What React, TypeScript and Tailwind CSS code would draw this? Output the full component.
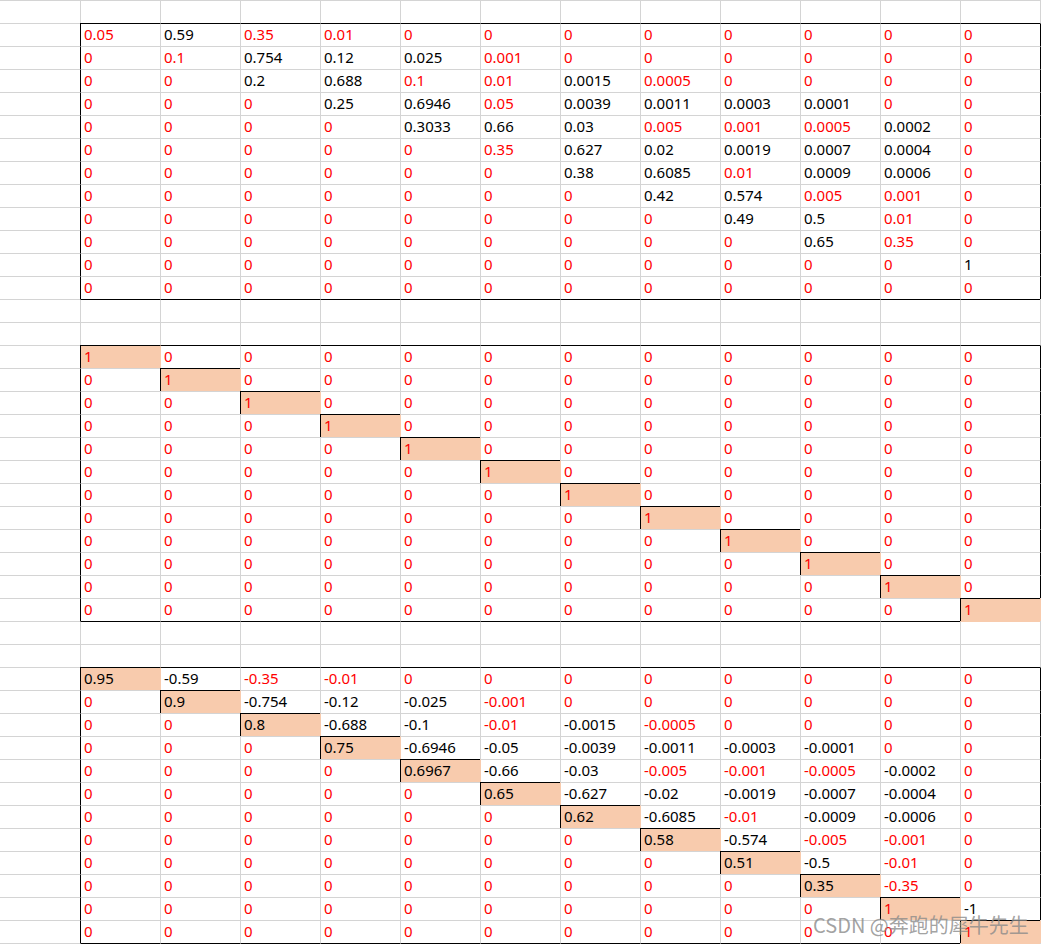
import React from 'react'

type Cell = { v: string; red: boolean }

const R = (v: string): Cell => ({ v, red: true })
const B = (v: string): Cell => ({ v, red: false })

function zeros(n: number): Cell[] {
  return Array.from({ length: n }, () => R('0'))
}

// 转移矩阵
const matA: Cell[][] = [
  [R('0.05'), B('0.59'), R('0.35'), R('0.01'), ...zeros(8)],
  [R('0'), R('0.1'), B('0.754'), B('0.12'), B('0.025'), R('0.001'), ...zeros(6)],
  [...zeros(2), B('0.2'), B('0.688'), R('0.1'), R('0.01'), B('0.0015'), R('0.0005'), ...zeros(4)],
  [...zeros(3), B('0.25'), B('0.6946'), R('0.05'), B('0.0039'), B('0.0011'), B('0.0003'), B('0.0001'), ...zeros(2)],
  [...zeros(4), B('0.3033'), B('0.66'), B('0.03'), R('0.005'), R('0.001'), R('0.0005'), B('0.0002'), R('0')],
  [...zeros(5), R('0.35'), B('0.627'), B('0.02'), B('0.0019'), B('0.0007'), B('0.0004'), R('0')],
  [...zeros(6), B('0.38'), B('0.6085'), R('0.01'), B('0.0009'), B('0.0006'), R('0')],
  [...zeros(7), B('0.42'), B('0.574'), R('0.005'), R('0.001'), R('0')],
  [...zeros(8), B('0.49'), B('0.5'), R('0.01'), R('0')],
  [...zeros(9), B('0.65'), R('0.35'), R('0')],
  [...zeros(11), B('1')],
  zeros(12),
]

// 单位矩阵
const matI: Cell[][] = Array.from({ length: 12 }, (_, i) =>
  Array.from({ length: 12 }, (_, j) => R(i === j ? '1' : '0')),
)

// I - P
const matC: Cell[][] = [
  [B('0.95'), B('-0.59'), R('-0.35'), R('-0.01'), ...zeros(8)],
  [R('0'), B('0.9'), B('-0.754'), B('-0.12'), B('-0.025'), R('-0.001'), ...zeros(6)],
  [...zeros(2), B('0.8'), B('-0.688'), B('-0.1'), R('-0.01'), B('-0.0015'), R('-0.0005'), ...zeros(4)],
  [...zeros(3), B('0.75'), B('-0.6946'), B('-0.05'), B('-0.0039'), B('-0.0011'), B('-0.0003'), B('-0.0001'), ...zeros(2)],
  [...zeros(4), B('0.6967'), B('-0.66'), B('-0.03'), R('-0.005'), R('-0.001'), R('-0.0005'), B('-0.0002'), R('0')],
  [...zeros(5), B('0.65'), B('-0.627'), B('-0.02'), B('-0.0019'), B('-0.0007'), B('-0.0004'), R('0')],
  [...zeros(6), B('0.62'), B('-0.6085'), R('-0.01'), B('-0.0009'), B('-0.0006'), R('0')],
  [...zeros(7), B('0.58'), B('-0.574'), R('-0.005'), R('-0.001'), R('0')],
  [...zeros(8), B('0.51'), B('-0.5'), R('-0.01'), R('0')],
  [...zeros(9), B('0.35'), R('-0.35'), R('0')],
  [...zeros(10), R('1'), B('-1')],
  [...zeros(11), R('1')],
]

const blocks = [
  { start: 1, data: matA, diag: false },
  { start: 15, data: matI, diag: true },
  { start: 29, data: matC, diag: true },
]

const ROWS = 42
const COLS = 14

type Edge = 'gray' | 'black' | 'fill'

const topCls: Record<Edge, string> = {
  gray: 'border-t-[#d4d4d4]',
  black: 'border-t-black',
  fill: 'border-t-[#f8cbad]',
}
const leftCls: Record<Edge, string> = {
  gray: 'border-l-[#d4d4d4]',
  black: 'border-l-black',
  fill: 'border-l-[#f8cbad]',
}

function blockAt(r: number) {
  return blocks.find((b) => r >= b.start && r < b.start + 12)
}

function isFilled(r: number, c: number) {
  const b = blockAt(r)
  if (!b || !b.diag) return false
  return c === r - b.start + 1
}

function getCell(r: number, c: number): Cell | null {
  const b = blockAt(r)
  if (!b || c < 1 || c > 12) return null
  return b.data[r - b.start][c - 1]
}

function topEdge(r: number, c: number): Edge {
  if (isFilled(r, c)) return 'black'
  if (c < 1 || c > 12) return 'gray'
  for (const b of blocks) {
    if (r === b.start) return 'black'
    if (r === b.start + 12) {
      if (b.diag && c === 12) return 'fill'
      return 'black'
    }
  }
  return 'gray'
}

function leftEdge(r: number, c: number): Edge {
  if (isFilled(r, c)) return 'black'
  if (c >= 1 && isFilled(r, c - 1)) return 'fill'
  const b = blockAt(r)
  if (b && (c === 1 || c === 13)) return 'black'
  return 'gray'
}

function SheetCell({ r, c }: { r: number; c: number }) {
  const cell = getCell(r, c)
  const filled = isFilled(r, c)
  const right = c === 13 && isFilled(r, 12)
  return (
    <div
      className={[
        'h-[23px] w-[80px] shrink-0 border-t pl-[3px] text-[15px] leading-[20px] whitespace-nowrap overflow-hidden',
        topCls[topEdge(r, c)],
        c === 0 ? '' : 'border-l ' + leftCls[leftEdge(r, c)],
        filled ? 'bg-[#f8cbad]' : 'bg-white',
        right ? 'bg-[#f8cbad]' : '',
        cell?.red ? 'text-[#ff0000]' : 'text-black',
      ].join(' ')}
    >
      {cell?.v}
    </div>
  )
}

export default function App() {
  return (
    <div className="relative h-[944px] w-[1041px] overflow-hidden bg-white font-['Noto_Sans','Noto_Sans_CJK_SC',sans-serif]">
      {Array.from({ length: ROWS }, (_, r) => (
        <div key={r} className="flex">
          {Array.from({ length: COLS }, (_, c) => (
            <SheetCell key={c} r={r} c={c} />
          ))}
        </div>
      ))}

      {/* 水印 */}
      <div className="absolute left-[813px] top-[911px] text-[20px] leading-[28px] whitespace-nowrap text-[#8a8a8a]/80 font-['Noto_Sans_CJK_SC',sans-serif]">
        CSDN @奔跑的犀牛先生
      </div>
    </div>
  )
}
